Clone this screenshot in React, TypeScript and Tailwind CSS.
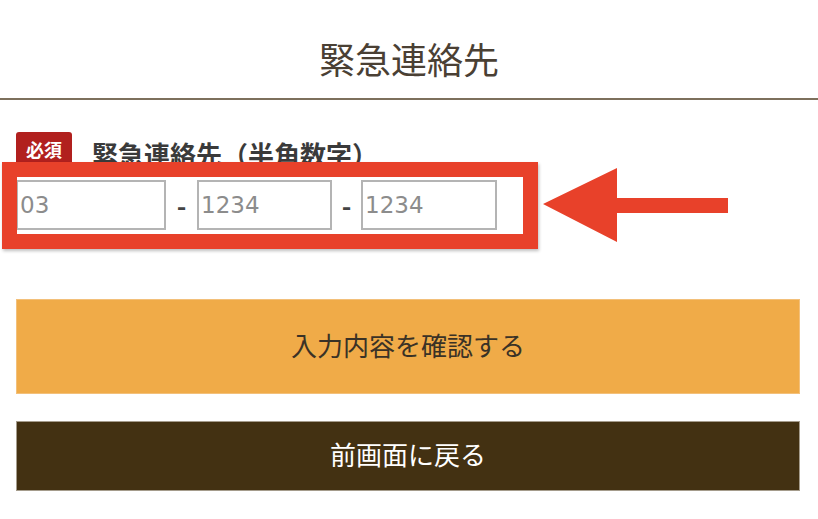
const jp = { fontFamily: '"Noto Sans CJK JP", "Noto Sans", sans-serif' };

function TelInput({ width, placeholder }: { width: string; placeholder: string }) {
  return (
    <input
      type="text"
      placeholder={placeholder}
      className={`${width} h-[50px] border-2 border-[#b4b4b4] bg-white px-[2px] text-[23px] text-[#333] placeholder:text-[#8c8c8c] outline-none`}
      style={{ fontFamily: '"DejaVu Sans", Verdana, sans-serif' }}
    />
  );
}

export default function App() {
  return (
    <div className="relative w-[818px] h-[519px] bg-white overflow-hidden" style={jp}>
      <header className="h-[100px] pt-[18px] flex items-center justify-center border-b-2 border-[#7d705c]">
        <h1 className="text-[36px] leading-none text-[#4a4034]">緊急連絡先</h1>
      </header>

      <div className="px-4">
        <div className="mt-[32px] flex items-start gap-[20px] h-[32px]">
          <span className="w-[56px] h-[34px] shrink-0 rounded-[3px] bg-[#b1201e] flex items-center justify-center text-[18px] font-bold text-white leading-none">
            必須
          </span>
          <span className="mt-[9px] text-[26px] font-bold text-[#3a3a3a] leading-none whitespace-nowrap">
            緊急連絡先（半角数字）
          </span>
        </div>

        <div className="mt-[16px] flex items-center">
          <TelInput width="w-[150px]" placeholder="03" />
          <span className="w-[31px] text-center text-[26px] font-bold text-[#444] leading-none">-</span>
          <TelInput width="w-[135px]" placeholder="1234" />
          <span className="w-[29px] text-center text-[26px] font-bold text-[#444] leading-none">-</span>
          <TelInput width="w-[136px]" placeholder="1234" />
        </div>

        <button className="mt-[69px] w-[784px] h-[95px] pb-[5px] bg-[#f0ab48] border border-[#f3c07a] flex items-center justify-center text-[26px] text-[#3a3226]">
          入力内容を確認する
        </button>
        <button className="mt-[27px] w-[784px] h-[70px] pb-[5px] bg-[#433112] border border-[#a59c8c] flex items-center justify-center text-[26px] text-white">
          前画面に戻る
        </button>
      </div>

      {/* annotation overlay */}
      <div className="absolute left-[2px] top-[162px] w-[536px] h-[87px] border-[15px] border-[#e8412a] shadow-[1px_2px_3px_rgba(0,0,0,0.25)]" />
      <svg className="absolute left-[540px] top-[164px]" width="194" height="82" viewBox="0 0 194 82">
        <path d="M3 40 L77 4 L77 34 L188 34 L188 49 L77 49 L77 78 Z" fill="#e8412a" />
      </svg>
    </div>
  );
}
